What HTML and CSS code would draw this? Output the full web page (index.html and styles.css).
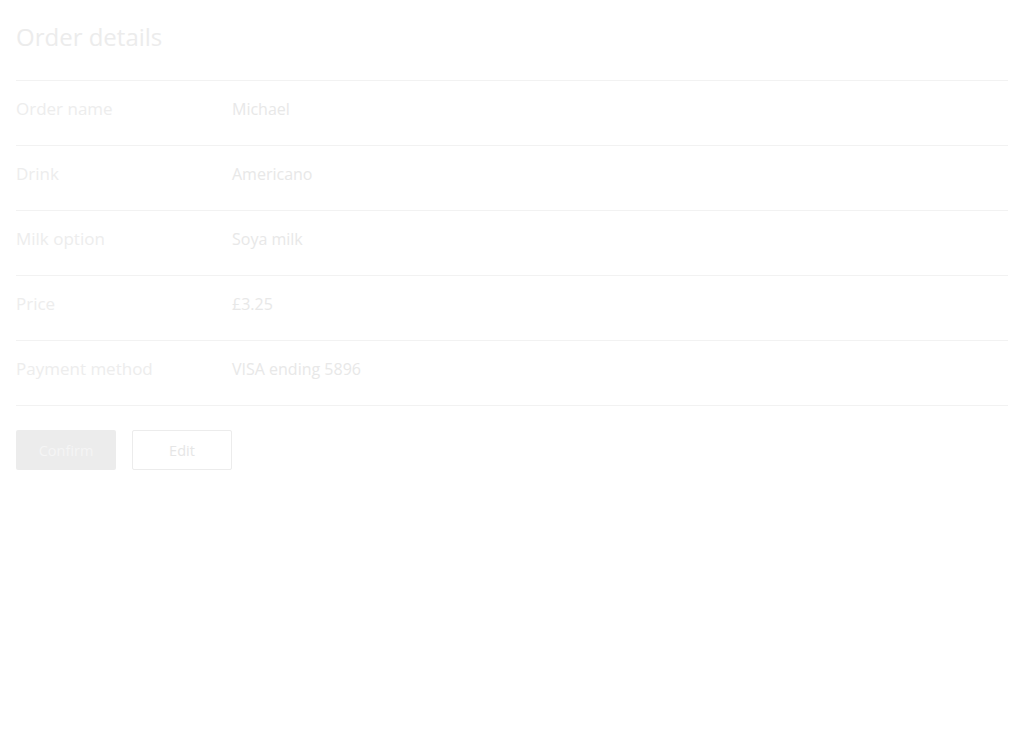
FILE: index.html
```html
<!DOCTYPE html>
<html>
<head>
<meta charset="utf-8">
<title>Order details</title>
<link rel="stylesheet" href="styles.css">
</head>
<body>
<main class="page">
  <h1 class="title">Order details</h1>
  <dl class="details">
    <div class="row"><dt class="label">Order name</dt><dd class="value">Michael</dd></div>
    <div class="row"><dt class="label">Drink</dt><dd class="value">Americano</dd></div>
    <div class="row"><dt class="label">Milk option</dt><dd class="value">Soya milk</dd></div>
    <div class="row"><dt class="label">Price</dt><dd class="value">£3.25</dd></div>
    <div class="row"><dt class="label">Payment method</dt><dd class="value">VISA ending 5896</dd></div>
  </dl>
  <div class="actions">
    <button class="btn btn-primary">Confirm</button>
    <button class="btn btn-secondary">Edit</button>
  </div>
</main>
</body>
</html>
```

FILE: styles.css
```css
html, body {
  margin: 0;
  padding: 0;
  background: #ffffff;
}
body {
  font-family: "Open Sans", "Noto Sans", sans-serif;
  color: #ececec;
}
.page {
  padding: 16px;
}
.title {
  margin: 0;
  padding: 5px 0 0;
  font-size: 24px;
  line-height: 32px;
  font-weight: 400;
  color: #ececec;
  height: 59px;
}
.details {
  margin: 0;
  border-top: 1px solid #f2f2f2;
}
.row {
  display: grid;
  grid-template-columns: 216px 1fr;
  height: 64px;
  align-items: center;
  border-bottom: 1px solid #f2f2f2;
}
.label, .value {
  margin: 0;
  line-height: 20px;
  padding-bottom: 8px;
}
.label {
  font-size: 17px;
  color: #ededed;
}
.value {
  font-size: 16px;
  color: #e8e8e8;
}
.actions {
  display: flex;
  gap: 16px;
  margin-top: 24px;
}
.btn {
  width: 100px;
  height: 40px;
  font-family: inherit;
  font-size: 14.5px;
  border-radius: 2px;
  cursor: pointer;
}
.btn-primary {
  background: #ececec;
  border: none;
  color: #f5f5f5;
}
.btn-secondary {
  background: #ffffff;
  border: 1px solid #ececec;
  color: #e6e6e6;
}
```
